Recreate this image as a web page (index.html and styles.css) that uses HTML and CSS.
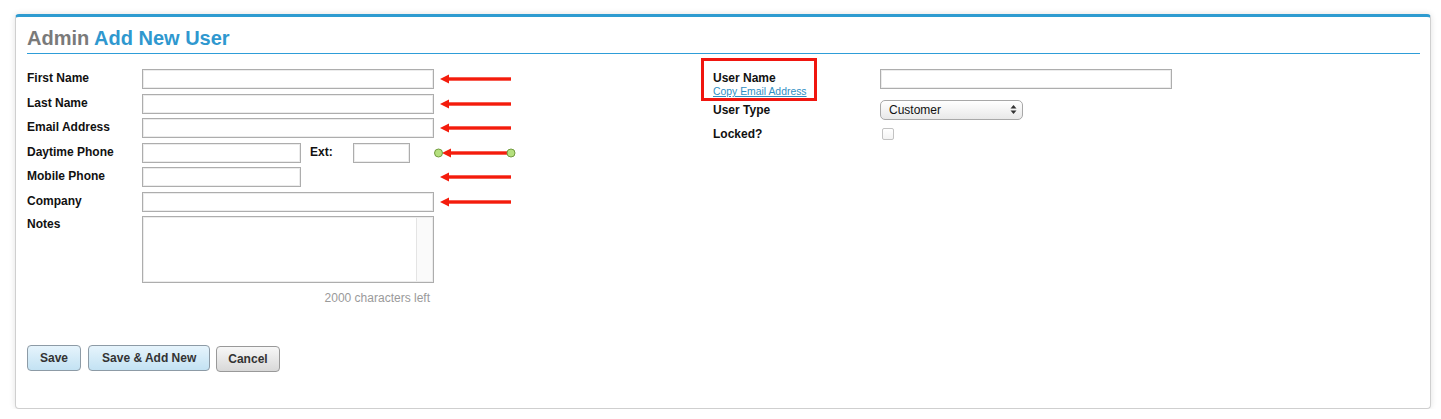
FILE: index.html
```html
<!DOCTYPE html>
<html lang="en">
<head>
    <meta charset="UTF-8">
    <title>Admin Add New User</title>
    <link rel="stylesheet" href="styles.css">
</head>
<body>

<div class="panel">
    <h1 class="panel-title"><span class="muted">Admin</span> Add New User</h1>

    <div class="form-cols">
        <div class="form-left">
            <div class="row">
                <label>First Name</label>
                <div class="field"><input type="text" class="txt wide"></div>
                <svg class="arrow" width="82" height="12" viewBox="0 0 82 12"><polygon points="6,6 15,1.5 15,10.5" /><rect x="14" y="4.3" width="63" height="3.4" /></svg>
            </div>
            <div class="row">
                <label>Last Name</label>
                <div class="field"><input type="text" class="txt wide"></div>
                <svg class="arrow" width="82" height="12" viewBox="0 0 82 12"><polygon points="6,6 15,1.5 15,10.5" /><rect x="14" y="4.3" width="63" height="3.4" /></svg>
            </div>
            <div class="row">
                <label>Email Address</label>
                <div class="field"><input type="text" class="txt wide"></div>
                <svg class="arrow" width="82" height="12" viewBox="0 0 82 12"><polygon points="6,6 15,1.5 15,10.5" /><rect x="14" y="4.3" width="63" height="3.4" /></svg>
            </div>
            <div class="row">
                <label>Daytime Phone</label>
                <div class="field">
                    <input type="text" class="txt phone">
                    <span class="ext-label">Ext:</span>
                    <input type="text" class="txt ext">
                </div>
                <svg class="arrow" width="82" height="12" viewBox="0 0 82 12"><polygon points="8,6 17,1.5 17,10.5" /><rect x="16" y="4.3" width="61" height="3.4" /><circle class="dot" cx="4.5" cy="6" r="4" /><circle class="dot" cx="77" cy="6" r="4" /></svg>
            </div>
            <div class="row">
                <label>Mobile Phone</label>
                <div class="field"><input type="text" class="txt phone"></div>
                <svg class="arrow" width="82" height="12" viewBox="0 0 82 12"><polygon points="6,6 15,1.5 15,10.5" /><rect x="14" y="4.3" width="63" height="3.4" /></svg>
            </div>
            <div class="row">
                <label>Company</label>
                <div class="field"><input type="text" class="txt wide"></div>
                <svg class="arrow" width="82" height="12" viewBox="0 0 82 12"><polygon points="6,6 15,1.5 15,10.5" /><rect x="14" y="4.3" width="63" height="3.4" /></svg>
            </div>
            <div class="row row-notes">
                <label>Notes</label>
                <div class="field"><textarea class="notes"></textarea></div>
            </div>
            <div class="char-count">2000 characters left</div>
        </div>

        <div class="form-right">
            <div class="rrow rrow-user">
                <div class="user-label">
                    <label>User Name</label>
                    <a href="#" class="copy-link">Copy Email Address</a>
                    <span class="callout"></span>
                </div>
                <input type="text" class="txt wide">
            </div>
            <div class="rrow">
                <label>User Type</label>
                <span class="select-wrap">
                    <select class="select">
                        <option>Customer</option>
                    </select>
                    <svg class="select-arrows" width="7" height="11" viewBox="0 0 7 11"><polygon points="3.5,1 6.5,4.5 0.5,4.5" /><polygon points="3.5,10 6.5,6.5 0.5,6.5" /></svg>
                </span>
            </div>
            <div class="rrow">
                <label>Locked?</label>
                <input type="checkbox" class="check">
            </div>
        </div>
    </div>

    <div class="actions">
        <button class="btn btn-primary">Save</button>
        <button class="btn btn-primary">Save &amp; Add New</button>
        <button class="btn btn-cancel">Cancel</button>
    </div>
</div>

</body>
</html>
```

FILE: styles.css
```css
body {
    font-family: "Liberation Sans", Arial, sans-serif;
    background-color: #fff;
    margin: 0;
    padding: 14px 0 0 15px;
    color: #111;
}

.panel {
    width: 1416px;
    box-sizing: border-box;
    background-color: #fff;
    border: 1px solid #cfcfcf;
    border-top: 3px solid #2e9bd0;
    border-radius: 4px;
    padding: 9px 10px 36px 11px;
    box-shadow: 0 0 6px rgba(0, 0, 0, 0.12);
}

.panel-title {
    margin: 0;
    font-size: 20px;
    line-height: 24px;
    font-weight: bold;
    color: #2f98cf;
    padding-bottom: 3px;
    border-bottom: 1px solid #2e9dd8;
}

.panel-title .muted {
    color: #7a7a7a;
}

.form-cols {
    display: flex;
    margin-top: 15px;
}

.form-left {
    width: 686px;
}

label {
    font-size: 12px;
    font-weight: bold;
    line-height: 14px;
}

.row {
    display: grid;
    grid-template-columns: 115px 292px 82px;
    align-items: center;
    height: 20px;
    margin-bottom: 4.5px;
}

.row > label {
    padding-bottom: 2px;
}

.row-notes {
    height: 67px;
    align-items: start;
    margin-bottom: 0;
}

.row-notes > label {
    padding: 1px 0 0;
}

.field {
    display: flex;
    align-items: center;
}

.txt {
    height: 20px;
    box-sizing: border-box;
    border: 1px solid #adadad;
    box-shadow: inset 0 0 0 1px #ececec;
    padding: 2px 4px;
    font-family: inherit;
    font-size: 12px;
    margin: 0;
    background-color: #fff;
}

.txt.wide {
    width: 292px;
}

.txt.phone {
    width: 159px;
}

.txt.ext {
    width: 57px;
}

.ext-label {
    font-size: 12px;
    font-weight: bold;
    margin: 0 0 2px 9px;
    width: 43px;
}

.notes {
    width: 292px;
    height: 67px;
    box-sizing: border-box;
    border: 1px solid #adadad;
    box-shadow: inset 0 0 0 1px #ececec;
    margin: 0;
    resize: none;
    background: linear-gradient(to right, #fff calc(100% - 17px), #e4e4e4 calc(100% - 17px), #e4e4e4 calc(100% - 16px), #fafafa calc(100% - 16px));
}

.arrow {
    overflow: visible;
    fill: #f41c0c;
}

.arrow .dot {
    fill: #b5e07e;
    stroke: #729c40;
    stroke-width: 1;
}

.char-count {
    width: 403px;
    margin-top: 8px;
    text-align: right;
    font-size: 12px;
    line-height: 14px;
    color: #9a9a9a;
}

/* right column */

.rrow {
    display: grid;
    grid-template-columns: 167px 292px;
    align-items: center;
    height: 20px;
    margin-bottom: 4px;
}

.rrow > label {
    padding-bottom: 1px;
}

.rrow-user {
    align-items: start;
    height: 30px;
    margin-bottom: 1px;
}

.user-label {
    position: relative;
}

.user-label label {
    display: block;
    line-height: 18px;
}

.copy-link {
    display: block;
    font-size: 10.4px;
    line-height: 10px;
    color: #2f8fc4;
    margin-top: 0;
}

.callout {
    position: absolute;
    left: -12px;
    top: -11px;
    width: 116px;
    height: 43px;
    box-sizing: border-box;
    border: 3px solid #f0160f;
}

.select-wrap {
    position: relative;
    width: 143px;
    height: 20px;
}

.select {
    appearance: none;
    -webkit-appearance: none;
    width: 143px;
    height: 20px;
    box-sizing: border-box;
    border: 1px solid #a8a8a8;
    border-radius: 5px;
    background: linear-gradient(#ffffff, #e8e8e8);
    font-family: inherit;
    font-size: 12px;
    color: #111;
    padding: 0 0 0 8px;
    margin: 0;
}

.select-arrows {
    position: absolute;
    right: 6px;
    top: 4px;
    fill: #333;
    pointer-events: none;
}

.check {
    appearance: none;
    -webkit-appearance: none;
    width: 12px;
    height: 12px;
    margin: 0 0 0 2px;
    border: 1px solid #c2c2c2;
    border-radius: 2px;
    background: linear-gradient(#fff, #f3f3f3);
}

/* buttons */

.actions {
    display: flex;
    align-items: flex-start;
    gap: 6px;
    margin-top: 40px;
}

.btn {
    font-family: inherit;
    font-size: 12px;
    font-weight: bold;
    line-height: 14px;
    color: #333;
    padding: 5px 12px;
    border-radius: 4px;
    cursor: pointer;
    margin: 0;
}

.btn-primary {
    border: 1px solid #8d9ba6;
    background: linear-gradient(#e6f4fc, #c3e2f3);
}

.btn-primary + .btn-primary {
    margin-left: 1px;
    padding: 5px 13px;
}

.btn-cancel {
    border: 1px solid #999;
    background: linear-gradient(#f7f7f7, #d8d8d8);
    margin-top: 1px;
    padding: 5px 11px;
}
```
